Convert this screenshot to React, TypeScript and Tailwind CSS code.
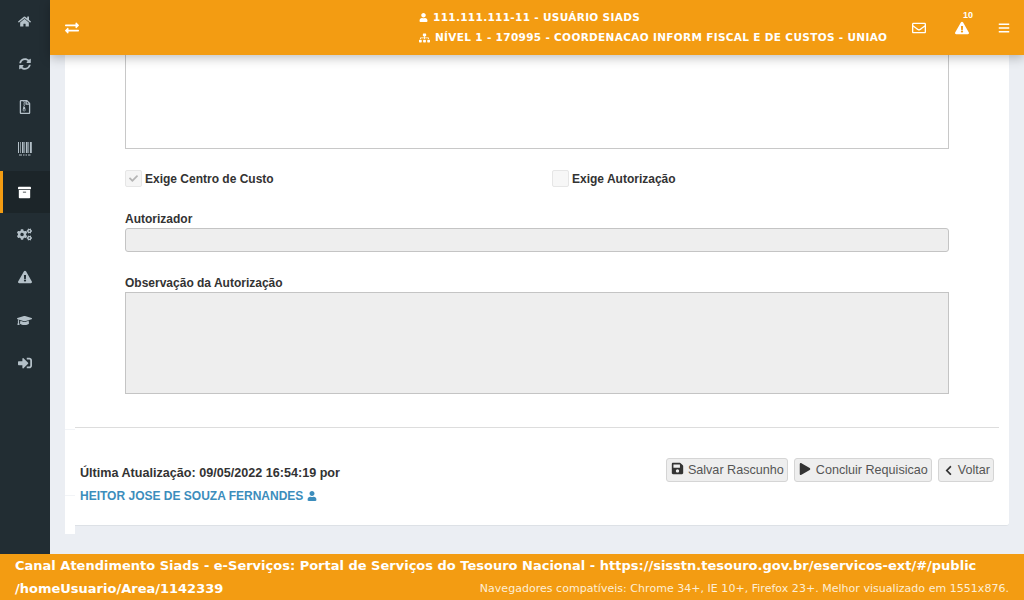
import {
  FaArchive,
  FaBars,
  FaChevronLeft,
  FaCheck,
  FaCogs,
  FaExchangeAlt,
  FaExclamationTriangle,
  FaGraduationCap,
  FaHome,
  FaPlay,
  FaRegEnvelope,
  FaRegFileArchive,
  FaSave,
  FaSignInAlt,
  FaSitemap,
  FaSyncAlt,
  FaUser,
} from 'react-icons/fa';

// font-awesome 4 style barcode, the one in react-icons has no dashes under the bars
const BarcodeIcon = ({ className }: { className?: string }) => (
  <svg viewBox="0 0 14 14" className={className} fill="currentColor">
    <rect x="0" y="0" width="1" height="11" />
    <rect x="2" y="0" width="0.7" height="11" />
    <rect x="4" y="0" width="1.6" height="11" />
    <rect x="6.4" y="0" width="0.7" height="11" />
    <rect x="8" y="0" width="1.6" height="11" />
    <rect x="10.4" y="0" width="0.7" height="11" />
    <rect x="12" y="0" width="1.8" height="11" />
    <rect x="1" y="12.5" width="3" height="1" />
    <rect x="5" y="12.5" width="1.5" height="1" />
    <rect x="7.5" y="12.5" width="1.5" height="1" />
    <rect x="10" y="12.5" width="2.5" height="1" />
  </svg>
);

const menu = [
  { icon: FaHome, size: 'h-[13px] w-[13px]' },
  { icon: FaSyncAlt, size: 'h-[12px] w-[12px]' },
  { icon: FaRegFileArchive, size: 'h-[14px] w-[14px]' },
  { icon: BarcodeIcon, size: 'h-[14px] w-[14px]' },
  { icon: FaArchive, size: 'h-[13px] w-[13px]', active: true },
  { icon: FaCogs, size: 'h-[15px] w-[15px]' },
  { icon: FaExclamationTriangle, size: 'h-[14px] w-[14px]' },
  { icon: FaGraduationCap, size: 'h-[15px] w-[15px]' },
  { icon: FaSignInAlt, size: 'h-[14px] w-[14px]' },
];

const Sidebar = () => (
  <aside className="w-[50px] shrink-0 bg-[#222d33]">
    {menu.map(({ icon: Icon, size, active }, i) =>
      active ? (
        <div key={i} className="flex h-[42.7px] items-center justify-center border-l-[3px] border-[#f39c12] bg-[#1c2529] pr-[4px] text-white">
          <Icon className={size} />
        </div>
      ) : (
        <div key={i} className="flex h-[42.7px] items-center justify-center pr-[1px] text-[#b4c0c8]">
          <Icon className={size} />
        </div>
      ),
    )}
  </aside>
);

const Header = () => (
  <header className="relative z-10 flex h-[55px] shrink-0 items-center bg-[#f39c12] pl-[15px] pr-[14px] text-white shadow-[0_3px_10px_rgba(0,0,0,0.25)]">
    <FaExchangeAlt className="h-[14px] w-[14px]" />
    <div className="ml-[340px] flex flex-col gap-[5px] font-['DejaVu_Sans',sans-serif] text-[10.5px] font-bold leading-[15px] tracking-[0.33px]">
      <div className="flex items-center gap-[5px]">
        <FaUser className="h-[9px] w-[9px]" />
        <span>111.111.111-11 - USUÁRIO SIADS</span>
      </div>
      <div className="flex items-center gap-[5px]">
        <FaSitemap className="h-[10px] w-[11px]" />
        <span>NÍVEL 1 - 170995 - COORDENACAO INFORM FISCAL E DE CUSTOS - UNIAO</span>
      </div>
    </div>
    <div className="ml-auto flex items-center gap-[29px]">
      <FaRegEnvelope className="h-[14px] w-[14px]" />
      <div className="relative">
        <FaExclamationTriangle className="h-[14px] w-[14px]" />
        <span className="absolute -top-[11px] left-[8px] font-['Liberation_Sans',sans-serif] text-[9px] font-bold leading-[10px]">10</span>
      </div>
      <FaBars className="h-[12px] w-[12px]" />
    </div>
  </header>
);

const ActionButton = ({ icon: Icon, label, iconClass }: { icon: typeof FaSave; label: string; iconClass: string }) => (
  <button className="flex h-[24px] items-center gap-[4px] rounded-[3px] border border-[#d5d5d5] bg-[#eeeeee] pl-[4px] pr-[3px] text-[12.6px] text-[#555555]">
    <Icon className={`${iconClass} text-[#333333]`} />
    {label}
  </button>
);

const Form = () => (
  <div className="px-[50px] font-['Liberation_Sans',sans-serif] text-[#333333]">
    <div className="-mt-[16px] h-[110px] border border-[#c8c8c8] bg-white" />
    <div className="mt-[21px] grid grid-cols-2 text-[12px] font-bold">
      <label className="flex h-[17px] items-center gap-[3px]">
        <span className="flex h-[17px] w-[17px] items-center justify-center rounded-[2px] border border-[#e6e6e6] bg-[#f5f5f5]">
          <FaCheck className="h-[9px] w-[9px] text-[#b5b5b5]" />
        </span>
        Exige Centro de Custo
      </label>
      <label className="ml-[15px] flex h-[17px] items-center gap-[3px]">
        <span className="h-[17px] w-[17px] rounded-[2px] border border-[#e6e6e6] bg-[#f7f7f7]" />
        Exige Autorização
      </label>
    </div>
    <div className="mt-[25px] text-[12px] font-bold leading-[15px]">Autorizador</div>
    <div className="mt-[1px] h-[24px] rounded-[3px] border border-[#c4c4c4] bg-[#eeeeee]" />
    <div className="mt-[24px] text-[12px] font-bold leading-[15px]">Observação da Autorização</div>
    <div className="mt-[1px] h-[102px] border border-[#c4c4c4] bg-[#eeeeee]" />
  </div>
);

const FormFooter = () => (
  <div className="flex items-start justify-between pl-[5px] pr-[5px] pt-[30px] font-['Liberation_Sans',sans-serif]">
    <div>
      <div className="mt-[8px] text-[12.6px] font-bold leading-[15px] text-[#333333]">Última Atualização: 09/05/2022 16:54:19 por</div>
      <div className="mt-[8px] flex items-center gap-[4px] text-[12px] font-bold leading-[15px] text-[#3c8dbc]">
        HEITOR JOSE DE SOUZA FERNANDES
        <FaUser className="-mt-[1px] h-[10px] w-[10px]" />
      </div>
    </div>
    <div className="flex gap-[6px]">
      <ActionButton icon={FaSave} label="Salvar Rascunho" iconClass="h-[13px] w-[13px] -mt-[3px]" />
      <ActionButton icon={FaPlay} label="Concluir Requisicao" iconClass="h-[12px] w-[12px] -mt-[2px] mr-[1px]" />
      <ActionButton icon={FaChevronLeft} label="Voltar" iconClass="h-[11px] w-[11px]" />
    </div>
  </div>
);

const Footer = () => (
  <footer className="h-[46px] shrink-0 bg-[#f39c12] px-[15px] font-['DejaVu_Sans',sans-serif] text-white">
    <div className="text-[13px] font-bold leading-[23px]">
      Canal Atendimento Siads - e-Serviços: Portal de Serviços do Tesouro Nacional - https://sisstn.tesouro.gov.br/eservicos-ext/#/public
    </div>
    <div className="flex items-center justify-between leading-[23px]">
      <span className="text-[13px] font-bold">/homeUsuario/Area/1142339</span>
      <span className="text-[11px] tracking-[0.03px] text-[#fdeed6]">Navegadores compatíveis: Chrome 34+, IE 10+, Firefox 23+. Melhor visualizado em 1551x876.</span>
    </div>
  </footer>
);

export default function App() {
  return (
    <div className="flex h-[600px] w-[1024px] flex-col overflow-hidden bg-[#ebeef3]">
      <div className="flex min-h-0 flex-1">
        <Sidebar />
        <main className="flex min-w-0 flex-1 flex-col">
          <Header />
          <div className="flex items-start pl-[15px] pr-[15px]">
            <div className="h-[479px] w-[10px] shrink-0 bg-white">
              <div className="h-[375px] border-b border-[#f2f4f7]" />
              <div className="h-[66px] border-b border-[#f2f4f7]" />
            </div>
            <div className="h-[471px] flex-1 rounded-br-[3px] border-b border-[#dde1e6] bg-white">
              <div className="pr-[10px]">
                <Form />
                <div className="mt-[33px] border-t border-[#dddddd]" />
                <FormFooter />
              </div>
            </div>
          </div>
        </main>
      </div>
      <Footer />
    </div>
  );
}
